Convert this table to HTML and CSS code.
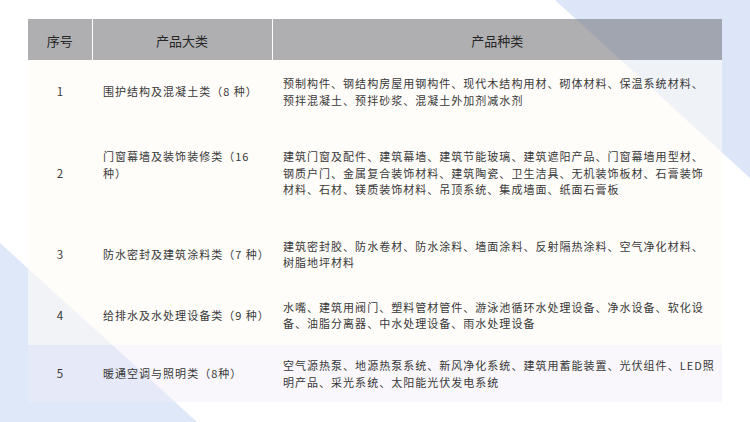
FILE: index.html
```html
<!DOCTYPE html>
<html lang="zh-CN">
<head>
<meta charset="utf-8">
<title>产品种类</title>
<link rel="stylesheet" href="styles.css">
</head>
<body>
<div class="slide">
  <svg class="deco" width="750" height="422" viewBox="0 0 750 422" aria-hidden="true">
    <polygon points="555,0 750,0 750,178" fill="#dce6f8"/>
    <polygon points="0,243 0,422 197,422" fill="#dfe8f9"/>
  </svg>
  <table class="grid">
    <thead>
      <tr class="head">
        <th class="c-no">序号</th>
        <th class="c-cat">产品大类</th>
        <th class="c-kind">产品种类</th>
      </tr>
    </thead>
    <tbody>
      <tr class="r1">
        <td class="c-no">1</td>
        <td class="c-cat">围护结构及混凝土类（8 种）</td>
        <td class="c-kind">预制构件、钢结构房屋用钢构件、现代木结构用材、砌体材料、保温系统材料、<br>预拌混凝土、预拌砂浆、混凝土外加剂减水剂</td>
      </tr>
      <tr class="r2">
        <td class="c-no">2</td>
        <td class="c-cat top">门窗幕墙及装饰装修类（16<br>种）</td>
        <td class="c-kind">建筑门窗及配件、建筑幕墙、建筑节能玻璃、建筑遮阳产品、门窗幕墙用型材、<br>钢质户门、金属复合装饰材料、建筑陶瓷、卫生洁具、无机装饰板材、石膏装饰<br>材料、石材、镁质装饰材料、吊顶系统、集成墙面、纸面石膏板</td>
      </tr>
      <tr class="r3">
        <td class="c-no">3</td>
        <td class="c-cat">防水密封及建筑涂料类（7 种）</td>
        <td class="c-kind">建筑密封胶、防水卷材、防水涂料、墙面涂料、反射隔热涂料、空气净化材料、<br>树脂地坪材料</td>
      </tr>
      <tr class="r4">
        <td class="c-no">4</td>
        <td class="c-cat">给排水及水处理设备类（9 种）</td>
        <td class="c-kind">水嘴、建筑用阀门、塑料管材管件、游泳池循环水处理设备、净水设备、软化设<br>备、油脂分离器、中水处理设备、雨水处理设备</td>
      </tr>
      <tr class="r5">
        <td class="c-no">5</td>
        <td class="c-cat">暖通空调与照明类（8种）</td>
        <td class="c-kind">空气源热泵、地源热泵系统、新风净化系统、建筑用蓄能装置、光伏组件、LED照<br>明产品、采光系统、太阳能光伏发电系统</td>
      </tr>
    </tbody>
  </table>
</div>
</body>
</html>
```

FILE: styles.css
```css
html, body {
  margin: 0;
  padding: 0;
  background: #ffffff;
}

.slide {
  position: relative;
  width: 750px;
  height: 422px;
  overflow: hidden;
  background: #ffffff;
  padding-top: 19px;
  box-sizing: border-box;
  font-family: "Noto Sans CJK SC", "Noto Sans", sans-serif;
}

.deco {
  position: absolute;
  left: 0;
  top: 0;
  z-index: 0;
}

.grid {
  position: relative;
  z-index: 1;
  margin-left: 28px;
  width: 694px;
  border-collapse: collapse;
  border-spacing: 0;
  table-layout: fixed;
}

.grid th,
.grid td {
  box-sizing: border-box;
  padding: 0;
  vertical-align: middle;
  overflow: visible;
  white-space: nowrap;
}

.c-no { width: 64px; text-align: center; }
.c-cat { width: 180px; }
.c-kind { width: 450px; }

.head th {
  height: 41px;
  background: rgba(118, 118, 122, 0.58);
  color: #262626;
  font-size: 13px;
  font-weight: normal;
  text-align: center;
  border-left: 1px solid #ffffff;
  padding-top: 2px;
}

.head th:first-child {
  border-left: none;
}

.grid td {
  font-size: 11px;
  letter-spacing: 1.02px;
  line-height: 16.5px;
  color: #383838;
  background: rgba(255, 252, 246, 0.55);
}

.grid td.c-cat,
.grid td.c-kind {
  padding-left: 11px;
}

.grid td.c-no {
  letter-spacing: 0;
  font-size: 11.5px;
}

.grid td.top {
  vertical-align: top;
  padding-top: 25px;
}

.r1 td { height: 63px; }
.r2 td { height: 100px; }
.r3 td { height: 62px; }
.r4 td { height: 60px; }
.r5 td {
  height: 57px;
  background: rgba(240, 236, 246, 0.4);
}
```
